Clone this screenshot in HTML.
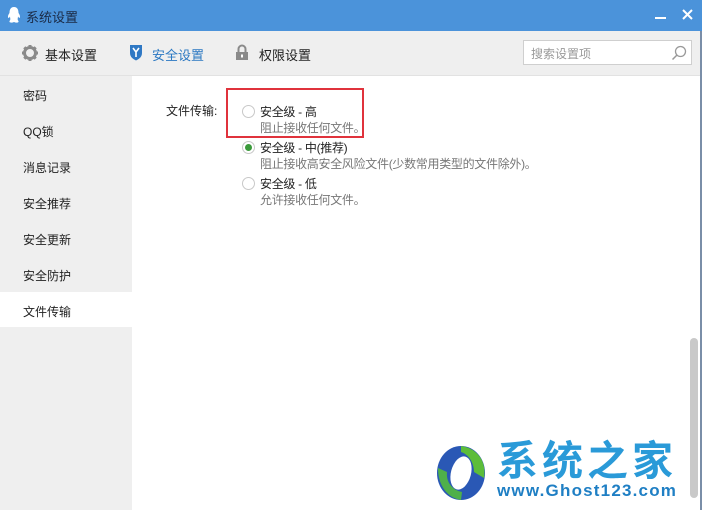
<!DOCTYPE html>
<html><head><meta charset="utf-8"><style>
*{margin:0;padding:0;box-sizing:border-box}
body{width:702px;height:510px;overflow:hidden;background:#fff;font-family:"Liberation Sans","Noto Sans CJK SC",sans-serif;font-size:12px;color:#222;position:relative}
.title{position:absolute;left:0;top:0;width:702px;height:31px;background:#4b93da;color:#fff}
.title .t{position:absolute;left:26px;top:7px;font-size:13px;color:#1a2a45}
.tb{position:absolute;left:0;top:31px;width:702px;height:45px;background:#efefef;border-bottom:1px solid #e2e2e2}
.tab{position:absolute;top:14px;font-size:13px;color:#222}
.side{position:absolute;left:0;top:76px;width:132px;height:434px;background:#efefef}
.side .it{position:absolute;left:23px;font-size:12px;color:#222}
.sel{position:absolute;left:0;top:216px;width:132px;height:35px;background:#fff}
.r{position:absolute;width:13px;height:13px;border:1px solid #c8c8c8;border-radius:50%;background:#fff}
.l1{position:absolute;left:260px;font-size:12px;color:#222;letter-spacing:-0.3px}
.l2{position:absolute;left:260px;font-size:12px;color:#777;letter-spacing:-0.3px}
</style></head><body>
<div class="title">
<svg style="position:absolute;left:7px;top:6px" width="14" height="18" viewBox="0 0 14 18"><path d="M7 1C3.5 1 2.5 4 2.5 7 1 9 0.5 11 1.5 12 2 12 2.5 11 3 10.5 3 12 4 13.5 2.5 15 2 17 5 17 7 16 9 17 12 17 11.5 15 10 13.5 11 12 11 10.5 11.5 11 12 12 12.5 12 13.5 11 13 9 11.5 7 11.5 4 10.5 1 7 1Z" fill="#fff"/></svg>
<span class="t" style="left:26px">系统设置</span>
<div style="position:absolute;left:655px;top:17px;width:11px;height:2px;background:#fff"></div>
<svg style="position:absolute;left:682px;top:9px" width="11" height="11"><path d="M1 1L10 10M10 1L1 10" stroke="#fff" stroke-width="2"/></svg>
</div>
<div class="tb">
<svg style="position:absolute;left:22px;top:14px" width="16" height="16" viewBox="0 0 16 16"><circle cx="8" cy="8" r="5.5" fill="none" stroke="#8a8a8a" stroke-width="3"/><g stroke="#8a8a8a" stroke-width="3"><path d="M8 0v3M8 13v3M0 8h3M13 8h3M2.3 2.3l2 2M11.7 11.7l2 2M2.3 13.7l2-2M11.7 4.3l2-2"/></g></svg>
<span class="tab" style="left:45px">基本设置</span>
<svg style="position:absolute;left:129px;top:13px" width="14" height="17" viewBox="0 0 14 17"><path d="M1 1h12v8c0 4-3 6-6 7.5C4 15 1 13 1 9Z" fill="#2f78c4"/><path d="M4 4l3 4 3-4M7 8v5" stroke="#fff" stroke-width="1.6" fill="none"/></svg>
<span class="tab" style="left:152px;color:#2b78c2">安全设置</span>
<svg style="position:absolute;left:235px;top:13px" width="14" height="17" viewBox="0 0 14 17"><path d="M3.5 8V5a3.5 3.5 0 0 1 7 0v3" stroke="#8a8a8a" stroke-width="2" fill="none"/><rect x="1" y="8" width="12" height="8" fill="#8a8a8a"/><rect x="6" y="10.5" width="2" height="3" fill="#fff"/></svg>
<span class="tab" style="left:259px">权限设置</span>
<div style="position:absolute;left:523px;top:9px;width:169px;height:25px;background:#fff;border:1px solid #cfcfcf"><span style="position:absolute;left:7px;top:4px;color:#999;font-size:12px">搜索设置项</span>
<svg style="position:absolute;left:147px;top:4px" width="16" height="16"><circle cx="9.5" cy="6.5" r="5" fill="none" stroke="#999" stroke-width="1.3"/><path d="M6 10L1.5 14.5" stroke="#999" stroke-width="1.5"/></svg></div>
</div>
<div class="side">
<div class="sel"></div>
<div class="it" style="top:11px">密码</div>
<div class="it" style="top:47px">QQ锁</div>
<div class="it" style="top:83px">消息记录</div>
<div class="it" style="top:119px">安全推荐</div>
<div class="it" style="top:155px">安全更新</div>
<div class="it" style="top:191px">安全防护</div>
<div class="it" style="top:227px">文件传输</div>
</div>
<div style="position:absolute;left:166px;top:102px">文件传输:</div>
<div style="position:absolute;left:226px;top:88px;width:138px;height:50px;border:2px solid #e0333c"></div>
<div class="r" style="left:242px;top:105px"></div>
<div class="l1" style="top:103px">安全级 - 高</div>
<div class="l2" style="top:119px">阻止接收任何文件。</div>
<div class="r" style="left:242px;top:141px"><div style="position:absolute;left:2px;top:2px;width:7px;height:7px;border-radius:50%;background:#3b9a3b"></div></div>
<div class="l1" style="top:139px">安全级 - 中(推荐)</div>
<div class="l2" style="top:155px">阻止接收高安全风险文件(少数常用类型的文件除外)。</div>
<div class="r" style="left:242px;top:177px"></div>
<div class="l1" style="top:175px">安全级 - 低</div>
<div class="l2" style="top:191px">允许接收任何文件。</div>
<div style="position:absolute;left:690px;top:338px;width:8px;height:160px;background:#c9c9c9;border-radius:4px"></div>
<div style="position:absolute;left:700px;top:31px;width:2px;height:479px;background:#7a8ea8"></div>
<svg style="position:absolute;left:432px;top:442px" width="58" height="62" viewBox="0 0 58 62"><ellipse cx="29" cy="31" rx="24" ry="27" fill="#2a58b5"/><path d="M29 4C44 6 55 18 52 36L42 30C42 20 36 12 29 10Z" fill="#5cbd3a"/><path d="M6 26C6 44 16 56 29 58L30 50C20 48 14 40 15 30Z" fill="#4fb04a"/><ellipse cx="29" cy="31" rx="10" ry="17" fill="#fff" transform="rotate(15 29 31)"/></svg>
<div style="position:absolute;left:497px;top:438px;font-size:41px;font-weight:bold;color:#2a9ad8;letter-spacing:4px;line-height:46px;white-space:nowrap">系统之家</div>
<div style="position:absolute;left:497px;top:481px;font-size:17px;font-weight:bold;color:#1f7fc4;letter-spacing:1.2px;white-space:nowrap">www.Ghost123.com</div>
</body></html>
